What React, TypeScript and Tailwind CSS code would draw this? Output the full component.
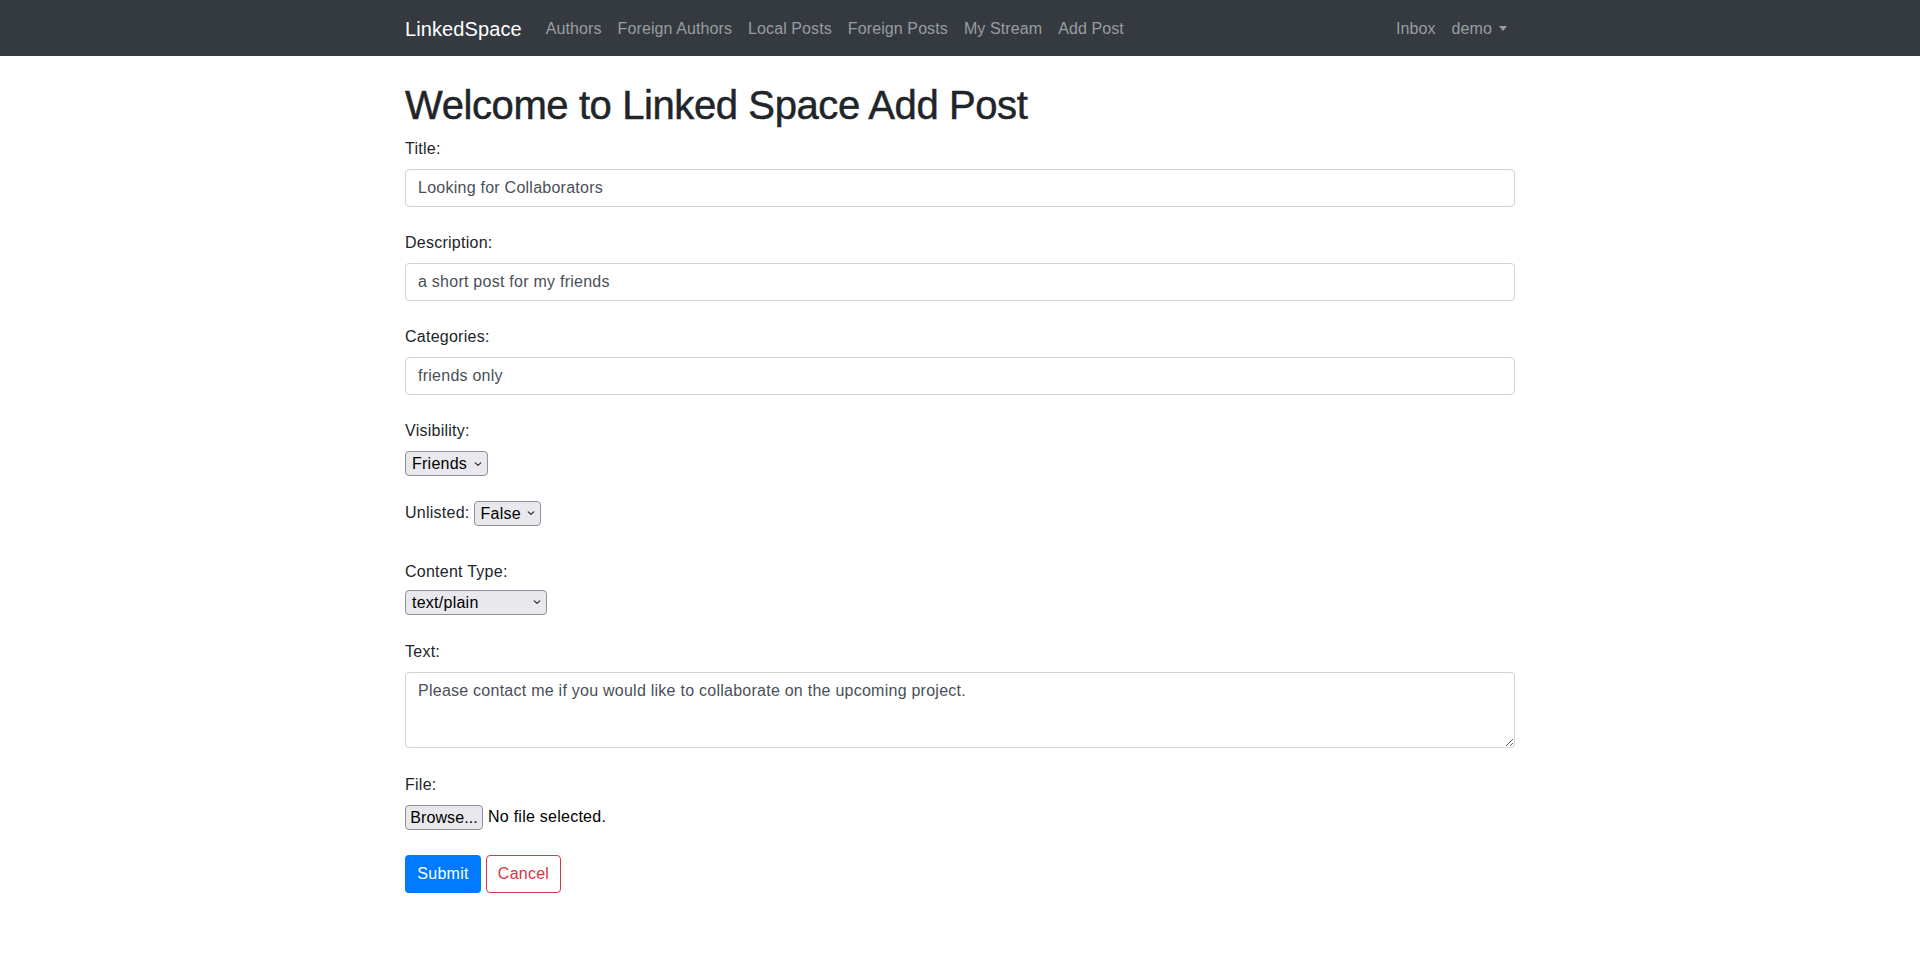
import { useState } from "react";

const navLinks = ["Authors", "Foreign Authors", "Local Posts", "Foreign Posts", "My Stream", "Add Post"];

function Chevron() {
  return (
    <svg className="pointer-events-none absolute right-[6px] top-1/2 -translate-y-1/2" width="8" height="6" viewBox="0 0 8 6">
      <path d="M1.2 1.8 L4 4.4 L6.8 1.8" fill="none" stroke="#222" strokeWidth="1.1" strokeLinecap="round" strokeLinejoin="round" />
    </svg>
  );
}

function FakeSelect({ options, width, value }: { options: string[]; width: string; value: string }) {
  const [val, setVal] = useState(value);
  return (
    <span className={`relative inline-block align-middle ${width}`}>
      <select
        value={val}
        onChange={(e) => setVal(e.target.value)}
        className="h-[25px] w-full appearance-none rounded-[4px] border border-[#8f8f9d] bg-[#e9e9ed] pl-[6px] pr-[18px] text-base leading-[23px] tracking-[0.25px] text-black outline-none"
      >
        {options.map((o) => (
          <option key={o}>{o}</option>
        ))}
      </select>
      <Chevron />
    </span>
  );
}

function Field({ label, value }: { label: string; value: string }) {
  return (
    <div className="mb-6">
      <label className="mb-2 block text-base leading-6 text-[#212529]">{label}</label>
      <input
        defaultValue={value}
        className="block h-[38px] w-full rounded-[4px] border border-[#ced4da] bg-white px-3 text-base tracking-[0.25px] text-[#495057] outline-none"
      />
    </div>
  );
}

export default function App() {
  return (
    <div className="min-h-screen bg-white font-['Liberation_Sans',Arial,sans-serif] tracking-[0.25px] text-[#212529]">
      <nav className="h-14 bg-[#343a40]">
        <div className="mx-auto flex h-full w-[1140px] items-center px-[15px] pt-[2px] tracking-[0.1px]">
          <a className="mr-4 text-xl leading-[30px] text-white" href="#">LinkedSpace</a>
          <div className="flex">
            {navLinks.map((l) => (
              <a key={l} href="#" className="px-2 py-2 text-base leading-6 text-[#9a9da0]">{l}</a>
            ))}
          </div>
          <div className="ml-auto flex">
            <a href="#" className="px-2 py-2 text-base leading-6 text-[#9a9da0]">Inbox</a>
            <a href="#" className="px-2 py-2 text-base leading-6 text-[#9a9da0]">
              demo
              <span className="ml-[7px] inline-block h-0 w-0 border-l-[4px] border-r-[4px] border-t-[5px] border-l-transparent border-r-transparent border-t-[#9a9da0] align-[3px]" />
            </a>
          </div>
        </div>
      </nav>

      <div className="mx-auto w-[1140px] px-[15px] pt-[25px]">
        <h1 className="mb-2 text-[40px] leading-[48px] font-medium tracking-[-0.4px] [-webkit-text-stroke:0.5px_#212529]">
          Welcome to Linked Space Add Post
        </h1>

        <Field label="Title:" value="Looking for Collaborators" />
        <Field label="Description:" value="a short post for my friends" />
        <Field label="Categories:" value="friends only" />

        <div className="mb-6">
          <label className="mb-2 block leading-6">Visibility:</label>
          <FakeSelect options={["Public", "Friends", "Private"]} value="Friends" width="w-[83px]" />
        </div>

        <div className="mb-[34px] flex h-[26px] items-center">
          <span className="mr-[4px] leading-6">Unlisted:</span>
          <FakeSelect options={["False", "True"]} value="False" width="w-[67px]" />
        </div>

        <div className="mb-[25px]">
          <label className="mb-[5px] block leading-6">Content Type:</label>
          <FakeSelect options={["text/plain", "text/markdown", "image/png"]} value="text/plain" width="w-[142px]" />
        </div>

        <div className="mb-[25px]">
          <label className="mb-2 block leading-6">Text:</label>
          <textarea
            defaultValue="Please contact me if you would like to collaborate on the upcoming project."
            className="block h-[76px] w-full rounded-[4px] border border-[#ced4da] px-3 py-[6px] text-base leading-6 tracking-[0.25px] text-[#495057] outline-none"
          />
        </div>

        <div className="mb-[25px]">
          <label className="mb-2 block leading-6">File:</label>
          <div className="flex h-[25px] items-center">
            <button className="h-[25px] w-[78px] rounded-[4px] border border-[#8f8f9d] bg-[#e9e9ed] text-base leading-[23px] tracking-[0.1px] text-black">
              Browse...
            </button>
            <span className="ml-[5px] text-base text-black">No file selected.</span>
          </div>
        </div>

        <div className="flex gap-[5px]">
          <button className="h-[38px] w-[76px] rounded-[4px] bg-[#007bff] text-base text-white">Submit</button>
          <button className="h-[38px] w-[75px] rounded-[4px] border border-[#dc3545] bg-white text-base text-[#dc3545]">Cancel</button>
        </div>
      </div>
    </div>
  );
}
